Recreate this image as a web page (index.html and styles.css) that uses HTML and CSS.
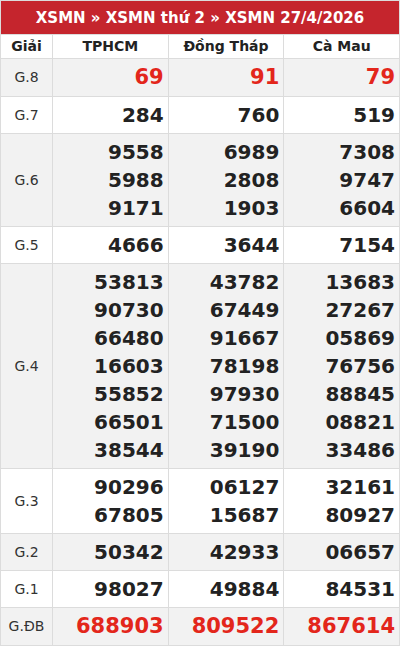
FILE: index.html
```html
<!DOCTYPE html>
<html lang="vi">
<head>
<meta charset="utf-8">
<link rel="stylesheet" href="styles.css">
</head>
<body>
<table class="kq">
  <colgroup>
    <col class="c-label"><col><col><col>
  </colgroup>
  <thead>
    <tr><th colspan="4" class="title">XSMN » XSMN thứ 2 » XSMN 27/4/2026</th></tr>
    <tr class="heads"><th>Giải</th><th>TPHCM</th><th>Đồng Tháp</th><th>Cà Mau</th></tr>
  </thead>
  <tbody>
    <tr class="alt red"><td class="lbl">G.8</td><td>69</td><td>91</td><td>79</td></tr>
    <tr><td class="lbl">G.7</td><td>284</td><td>760</td><td>519</td></tr>
    <tr class="alt"><td class="lbl">G.6</td><td>9558<br>5988<br>9171</td><td>6989<br>2808<br>1903</td><td>7308<br>9747<br>6604</td></tr>
    <tr><td class="lbl">G.5</td><td>4666</td><td>3644</td><td>7154</td></tr>
    <tr class="alt"><td class="lbl">G.4</td><td>53813<br>90730<br>66480<br>16603<br>55852<br>66501<br>38544</td><td>43782<br>67449<br>91667<br>78198<br>97930<br>71500<br>39190</td><td>13683<br>27267<br>05869<br>76756<br>88845<br>08821<br>33486</td></tr>
    <tr><td class="lbl">G.3</td><td>90296<br>67805</td><td>06127<br>15687</td><td>32161<br>80927</td></tr>
    <tr class="alt"><td class="lbl">G.2</td><td>50342</td><td>42933</td><td>06657</td></tr>
    <tr><td class="lbl">G.1</td><td>98027</td><td>49884</td><td>84531</td></tr>
    <tr class="alt red"><td class="lbl">G.ĐB</td><td>688903</td><td>809522</td><td>867614</td></tr>
  </tbody>
</table>
</body>
</html>
```
FILE: styles.css
```css
html, body {
  margin: 0;
  padding: 0;
  background: #fff;
}
body {
  font-family: "DejaVu Sans", sans-serif;
  color: #222;
}
.kq {
  width: 400px;
  border-collapse: collapse;
  table-layout: fixed;
  border: 1px solid #dcdcdc;
}
.c-label {
  width: 52px;
}
.kq th, .kq td {
  border: 1px solid #dcdcdc;
}
.title {
  background: #c5252d;
  color: #fff;
  font-size: 15px;
  font-weight: bold;
  height: 33px;
  padding: 0;
  text-align: center;
  border-color: #c5252d;
}
.heads th {
  font-size: 14px;
  font-weight: bold;
  color: #222;
  height: 23px;
  line-height: 17px;
  padding: 0;
  text-align: center;
  background: #fff;
}
.kq td {
  text-align: right;
  font-size: 20px;
  font-weight: bold;
  line-height: 28px;
  padding: 4px 4px 4px 4px;
  color: #222;
}
.kq td.lbl {
  text-align: center;
  font-size: 14px;
  font-weight: normal;
  color: #333;
  padding: 0;
}
.alt td {
  background: #f2f2f2;
}
.red td {
  color: #e3261b;
  font-size: 21px;
  line-height: 29px;
}
```
